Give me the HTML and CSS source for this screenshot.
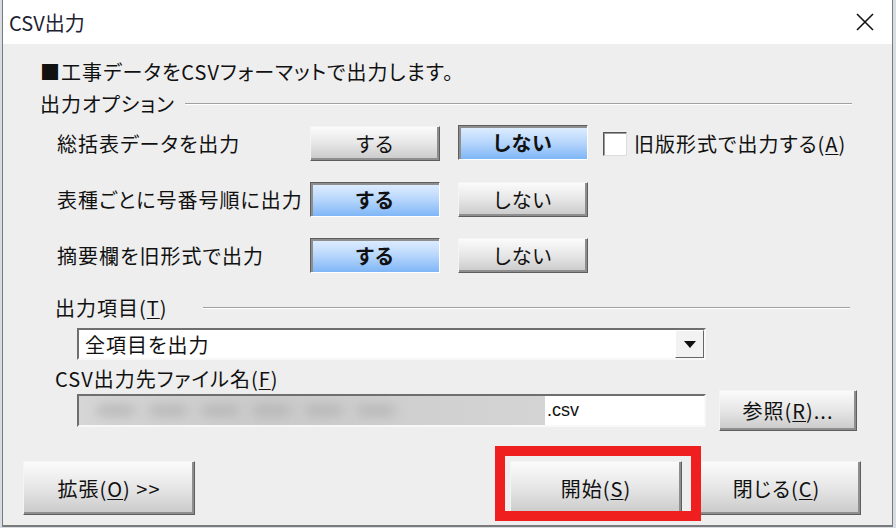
FILE: index.html
```html
<!DOCTYPE html>
<html lang="ja">
<head>
  <meta charset="UTF-8" />
  <title>CSV出力</title>
  <link rel="stylesheet" href="styles.css">
</head>
<body>
  <div class="ventana">
    <div class="titulo">
      <span class="titulo-texto">CSV出力</span>
      <span class="cerrar">
        <svg width="18" height="18" viewBox="0 0 18 18"><path d="M1 1 L17 17 M17 1 L1 17" stroke="#111" stroke-width="1.6" fill="none"/></svg>
      </span>
    </div>

    <div class="contenido">
      <div class="intro">■工事データをCSVフォーマットで出力します。</div>

      <div class="grupo">
        <span>出力オプション</span>
        <span class="linea"></span>
      </div>

      <div class="fila">
        <span class="etiqueta">総括表データを出力</span>
        <button class="boton">する</button>
        <button class="boton activo arriba">しない</button>
        <span class="check"></span>
        <span class="check-texto">旧版形式で出力する(<u>A</u>)</span>
      </div>
      <div class="fila">
        <span class="etiqueta">表種ごとに号番号順に出力</span>
        <button class="boton activo">する</button>
        <button class="boton">しない</button>
      </div>
      <div class="fila">
        <span class="etiqueta">摘要欄を旧形式で出力</span>
        <button class="boton activo">する</button>
        <button class="boton">しない</button>
      </div>

      <div class="grupo grupo-items">
        <span>出力項目(<u>T</u>)</span>
        <span class="linea"></span>
      </div>
      <div class="combo">
        <span class="combo-texto">全項目を出力</span>
        <span class="combo-flecha"><svg width="12" height="7" viewBox="0 0 12 7"><path d="M0 0 H12 L6 7 Z" fill="#111"/></svg></span>
      </div>

      <div class="sub">CSV出力先ファイル名(<u>F</u>)</div>
      <div class="fila-archivo">
        <div class="archivo">
          <span class="borroso"><i></i><i></i><i></i><i></i><i></i><i></i></span>
          <span class="ext">.csv</span>
        </div>
        <button class="boton boton-ref">参照(<u>R</u>)...</button>
      </div>
    </div>

    <div class="pie">
      <button class="boton boton-grande">拡張(<u>O</u>) &gt;&gt;</button>
      <span class="espacio"></span>
      <button class="boton boton-grande marcado">開始(<u>S</u>)</button>
      <button class="boton boton-grande cerrar-btn">閉じる(<u>C</u>)</button>
    </div>
  </div>
</body>
</html>
```

FILE: styles.css
```css
body {
  margin: 0;
  background: #d8dde3;
  font-family: "Noto Sans CJK JP", "Noto Sans", sans-serif;
  font-size: 20px;
  font-feature-settings: "palt";
  letter-spacing: 1px;
  color: #111;
}
u {
  text-decoration-thickness: 1px;
  text-underline-offset: 2px;
}
.ventana {
  margin-left: 2px;
  width: 889px;
  height: 525px;
  border: 1px solid #7a7a7a;
  border-top: none;
  border-bottom-width: 2px;
  background: #eeeeee;
  display: flex;
  flex-direction: column;
}
.titulo {
  height: 44px;
  background: #fff;
  display: flex;
  align-items: center;
  padding-left: 6px;
  padding-right: 18px;
}
.titulo-texto {
  flex: 1;
  color: #1d2233;
  letter-spacing: 0;
}
.cerrar {
  display: flex;
}
.contenido {
  padding: 16px 40px 0 37px;
}
.intro {
  line-height: 24px;
}
.grupo {
  display: flex;
  align-items: center;
  line-height: 24px;
  margin-top: 8px;
}
.linea {
  flex: 1;
  margin-left: 10px;
  border-top: 1px solid #a0a0a0;
  border-bottom: 1px solid #fff;
}
.fila {
  display: flex;
  align-items: center;
  height: 35px;
  margin-left: 17px;
  margin-top: 21px;
}
.grupo + .fila {
  margin-top: 10px;
}
.etiqueta {
  width: 253px;
}
.boton {
  font-family: inherit;
  font-size: 20px;
  font-feature-settings: "palt";
  letter-spacing: 1px;
  color: #111;
  width: 130px;
  height: 35px;
  padding: 0;
  margin-right: 18px;
  flex-shrink: 0;
  background: linear-gradient(#fbfbfb, #e6e6e6 50%, #c9c9c9);
  border: 1px solid;
  border-color: #f4f4f4 #5e5e5e #5e5e5e #f4f4f4;
  box-shadow: inset -2px -2px 0 #8e8e8e;
}
.boton.activo {
  font-weight: bold;
  background: linear-gradient(#e2efff, #b7d6fc 50%, #7fb6f6);
  border-color: #5e5e5e #ffffff #ffffff #5e5e5e;
  box-shadow: inset 2px 2px 0 #8e8e8e;
}
.boton.arriba {
  margin-top: -3px;
}
.check {
  width: 22px;
  height: 22px;
  margin-left: -3px;
  background: #fff;
  border: 1px solid;
  border-color: #555 #ddd #ddd #555;
  box-shadow: inset 1px 1px 0 #999;
}
.check-texto {
  margin-left: 7px;
}
.grupo-items {
  margin-top: 23px;
  margin-left: 15px;
}
.grupo-items .linea {
  margin-left: 35px;
  margin-right: 2px;
}
.combo {
  display: flex;
  align-items: center;
  margin: 8px 0 0 37px;
  width: 629px;
  height: 32px;
  box-sizing: border-box;
  background: #fff;
  border: 2px solid;
  border-color: #6e6e6e #f8f8f8 #f8f8f8 #6e6e6e;
}
.combo-texto {
  flex: 1;
  padding-left: 6px;
}
.combo-flecha {
  width: 29px;
  height: 28px;
  box-sizing: border-box;
  background: #f2f2f2;
  border: 1px solid;
  border-color: #fff #666 #666 #fff;
  display: flex;
  align-items: center;
  justify-content: center;
}
.sub {
  margin: 7px 0 0 15px;
  line-height: 24px;
}
.fila-archivo {
  display: flex;
  align-items: center;
  margin: -1px 0 0 37px;
}
.archivo {
  width: 629px;
  height: 33px;
  flex-shrink: 0;
  box-sizing: border-box;
  background: #fff;
  border: 2px solid;
  border-color: #6e6e6e #f8f8f8 #f8f8f8 #6e6e6e;
  display: flex;
  align-items: center;
}
.borroso {
  width: 466px;
  height: 100%;
  display: flex;
  align-items: center;
  gap: 14px;
  padding-left: 18px;
  box-sizing: border-box;
  background: linear-gradient(90deg, #d6d6d6, #cbcbcb 40%, #d4d4d4);
}
.borroso i {
  height: 9px;
  width: 38px;
  background: #b2b2b2;
  border-radius: 5px;
  filter: blur(6px);
}
.ext {
  margin-left: 2px;
  font-family: "Liberation Sans", sans-serif;
  font-size: 18px;
  letter-spacing: 0;
}
.boton-ref {
  width: 138px;
  height: 41px;
  margin-left: 13px;
  margin-right: 0;
}
.pie {
  display: flex;
  align-items: center;
  padding: 30px 31px 0 20px;
}
.espacio {
  flex: 1;
}
.boton-grande {
  width: 172px;
  height: 54px;
  margin-right: 0;
}
.cerrar-btn {
  width: 169px;
  margin-left: 10px;
}
.marcado {
  position: relative;
}
.marcado::after {
  content: "";
  position: absolute;
  left: -16px;
  top: -16px;
  width: 186px;
  height: 55px;
  border: 10px solid #f01f1f;
}
```
